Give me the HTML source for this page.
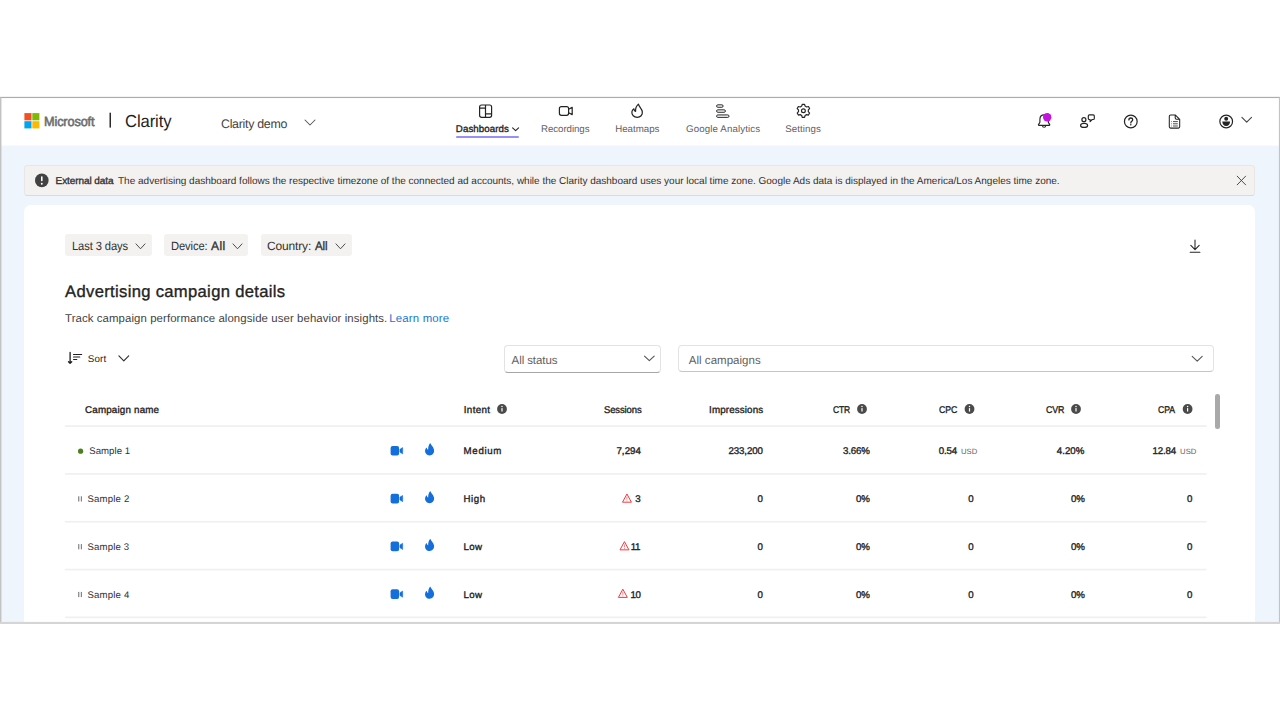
<!DOCTYPE html>
<html><head><meta charset="utf-8"><title>Clarity</title>
<style>
html,body{margin:0;padding:0;background:#fff;}
body{width:1280px;height:720px;position:relative;overflow:hidden;font-family:"Liberation Sans",sans-serif;}
.abs{position:absolute;}
.t{position:absolute;white-space:nowrap;text-rendering:geometricPrecision;line-height:20px;height:20px;font-family:"Liberation Sans",sans-serif;}
svg{position:absolute;overflow:visible;}
.line{position:absolute;height:1px;background:#efedeb;left:65px;width:1141.5px;}
</style></head><body>
<!-- frame -->
<div class="abs" id="frame" style="left:0;top:97px;width:1280px;height:527px;background:#eef5fd;"></div>
<div class="abs" id="hdr" style="left:0;top:97px;width:1280px;height:48px;background:#fff;"></div>
<div class="abs" style="left:0;top:145px;width:1280px;height:1px;background:#f8fbfe;"></div>
<!-- banner -->
<div class="abs" id="banner" style="left:24.4px;top:165.2px;width:1230.6px;height:30.7px;box-sizing:border-box;background:#f3f2f1;border:1px solid #e9e7e5;border-bottom:1.2px solid #dcdad8;border-radius:3.5px;"></div>
<!-- card -->
<div class="abs" id="card" style="left:24.4px;top:205px;width:1230.8px;height:416.9px;background:#fff;border-radius:6.5px 6.5px 0 0;"></div>
<!-- chips -->
<div class="abs" style="left:65px;top:234.3px;width:87px;height:22px;background:#f3f2f1;border-radius:3px;"></div>
<div class="abs" style="left:163.8px;top:234.3px;width:84.2px;height:22px;background:#f3f2f1;border-radius:3px;"></div>
<div class="abs" style="left:260.8px;top:234.3px;width:91.2px;height:22px;background:#f3f2f1;border-radius:3px;"></div>
<!-- dropdowns -->
<div class="abs" style="left:503.7px;top:345.4px;width:157.4px;height:27.2px;box-sizing:border-box;background:#fff;border:1px solid #e3e3e3;border-bottom:1.7px solid #a6a6a6;border-radius:4px;"></div>
<div class="abs" style="left:678.2px;top:345.4px;width:536.3px;height:26.4px;box-sizing:border-box;background:#fff;border:1px solid #e3e3e3;border-bottom:1.5px solid #c6c6c6;border-radius:4px;"></div>
<!-- scrollbar -->
<div class="abs" style="left:1215px;top:394.3px;width:4.6px;height:34.8px;background:#a9a9a9;border-radius:2.3px;"></div>
<!-- nav underline -->
<div class="abs" style="left:455.9px;top:136px;width:62.8px;height:2px;background:#9590fc;border-radius:1px;"></div>

<svg width="1280" height="720" viewBox="0 0 1280 720" style="left:0;top:0;"><rect x="0" y="96.85" width="1280" height="1.2" fill="#adadad"/><rect x="0" y="97.4" width="1.45" height="526.4" fill="#c3c3c3"/><rect x="1278.9" y="97.4" width="1.1" height="526.4" fill="#c3c3c3"/><rect x="0" y="621.9" width="1280" height="2.1" fill="#d5d5d5"/>
<rect x="24.4" y="113.1" width="7.1" height="7.2" fill="#f25022"/><rect x="32.3" y="113.1" width="7.1" height="7.2" fill="#7fba00"/><rect x="24.4" y="121.2" width="7.1" height="7.2" fill="#00a4ef"/><rect x="32.3" y="121.2" width="7.1" height="7.2" fill="#ffb900"/><rect x="109.5" y="112.7" width="1.5" height="14.9" fill="#2b2b2b"/>
<rect x="65" y="425.25" width="1141.6" height="1.7" fill="#f2f0ee"/>
<rect x="65" y="473.10" width="1141.6" height="1.7" fill="#f2f0ee"/>
<rect x="65" y="520.90" width="1141.6" height="1.7" fill="#f2f0ee"/>
<rect x="65" y="568.70" width="1141.6" height="1.7" fill="#f2f0ee"/>
<rect x="65" y="616.50" width="1141.6" height="1.7" fill="#f2f0ee"/>
<path d="M305 120 L310.0 125 L315 120" fill="none" stroke="#555" stroke-width="1.05" stroke-linecap="round" stroke-linejoin="round"/>
<rect x="479.6" y="105" width="12" height="12.3" rx="2" fill="none" stroke="#242424" stroke-width="1.2"/><path d="M485.5 105 V117.3 M479.6 108.2 H485.5 M485.5 113.9 H491.6" fill="none" stroke="#242424" stroke-width="1.2"/>
<path d="M512.6 127.8 L515.6 130.6 L518.6 127.8" fill="none" stroke="#242424" stroke-width="1.1" stroke-linecap="round" stroke-linejoin="round"/>
<rect x="559.4" y="106.6" width="9.2" height="8.7" rx="2" fill="none" stroke="#242424" stroke-width="1.2"/><path d="M568.6 109.3 L572.2 107.4 V114.6 L568.6 112.7" fill="none" stroke="#242424" stroke-width="1.2" stroke-linejoin="round"/>
<path transform="translate(631.8,104.1)" d="M6.6 0 C7.2 2.6 10.0 4.3 10.5 7.6 C11.0 10.9 8.6 13.2 5.4 13.2 C2.2 13.2 -0.3 10.8 0.1 7.8 C0.3 6.3 1.1 5.2 2.1 4.7 C2.1 5.9 2.7 6.9 3.8 7.2 C3.5 4.4 4.6 1.8 6.6 0Z" fill="none" stroke="#242424" stroke-width="1.25" stroke-linejoin="round"/>
<rect x="716.6" y="104.85" width="6.5" height="2.4" rx="1.2" fill="none" stroke="#242424" stroke-width="1"/><rect x="716.6" y="109.85" width="8.8" height="2.4" rx="1.2" fill="none" stroke="#242424" stroke-width="1"/><rect x="716.6" y="114.95" width="12.4" height="2.4" rx="1.2" fill="none" stroke="#242424" stroke-width="1"/>
<path d="M802.23 104.30 L804.57 104.30 L805.09 106.10 L806.63 106.98 L808.44 106.54 L809.61 108.56 L808.32 109.91 L808.32 111.69 L809.61 113.04 L808.44 115.06 L806.63 114.62 L805.09 115.50 L804.57 117.30 L802.23 117.30 L801.71 115.50 L800.17 114.62 L798.36 115.06 L797.19 113.04 L798.48 111.69 L798.48 109.91 L797.19 108.56 L798.36 106.54 L800.17 106.98 L801.71 106.10Z" fill="none" stroke="#242424" stroke-width="1.2" stroke-linejoin="round"/><circle cx="803.4" cy="110.8" r="1.9" fill="none" stroke="#242424" stroke-width="1.2"/>
<path d="M1044.1 114.9 C1041.3 114.9 1039.9 117 1039.9 119.4 V122.3 L1038.5 124.6 C1038.3 125 1038.5 125.3 1039 125.3 H1049.2 C1049.7 125.3 1049.9 125 1049.7 124.6 L1048.3 122.3 V119.4 C1048.3 117 1046.9 114.9 1044.1 114.9Z" fill="none" stroke="#242424" stroke-width="1.15" stroke-linejoin="round"/><path d="M1042.3 125.5 C1042.5 126.7 1043.2 127.3 1044.1 127.3 C1045 127.3 1045.7 126.7 1045.9 125.5" fill="none" stroke="#242424" stroke-width="1.05"/><circle cx="1047.2" cy="117.2" r="4.2" fill="#c512e2"/>
<circle cx="1083.9" cy="119.7" r="2.0" fill="none" stroke="#242424" stroke-width="1.2"/><ellipse cx="1084.1" cy="125.45" rx="3.5" ry="2.0" fill="none" stroke="#242424" stroke-width="1.2"/><path d="M1089.4 114.9 H1093.2 C1093.9 114.9 1094.3 115.3 1094.3 116 V118.4 C1094.3 119.1 1093.9 119.5 1093.2 119.5 H1092.2 L1090.1 121.7 V119.5 H1089.4 C1088.7 119.5 1088.3 119.1 1088.3 118.4 V116 C1088.3 115.3 1088.7 114.9 1089.4 114.9Z" fill="none" stroke="#242424" stroke-width="1.15" stroke-linejoin="round"/>
<circle cx="1130.8" cy="121.5" r="6.35" fill="none" stroke="#242424" stroke-width="1.2"/><path d="M1128.9 119.9 C1128.9 118.6 1129.7 118 1130.8 118 C1131.9 118 1132.7 118.7 1132.7 119.7 C1132.7 121.2 1130.8 121.2 1130.8 122.9" fill="none" stroke="#242424" stroke-width="1.3" stroke-linecap="round"/><circle cx="1130.8" cy="124.8" r="0.8" fill="#242424"/>
<path d="M1170.6 114.9 H1175.2 L1179.7 119.3 V126.8 C1179.7 127.6 1179.2 128.1 1178.4 128.1 H1170.6 C1169.8 128.1 1169.3 127.6 1169.3 126.8 V116.2 C1169.3 115.4 1169.8 114.9 1170.6 114.9Z M1175.2 114.9 V118 C1175.2 118.8 1175.7 119.3 1176.5 119.3 H1179.7" fill="none" stroke="#242424" stroke-width="1.05" stroke-linejoin="round"/><path d="M1171.4 121.6 H1172 M1173 121.6 H1177.8 M1171.4 123.8 H1172 M1173 123.8 H1177.8 M1171.4 126 H1172 M1173 126 H1177.8" stroke="#3a3a3a" stroke-width="0.9" fill="none"/>
<circle cx="1226.2" cy="121.5" r="6.35" fill="none" stroke="#242424" stroke-width="1.2"/><circle cx="1226.2" cy="118.8" r="1.95" fill="#242424"/><path d="M1222.3 121.5 H1230.1 C1230.1 124.2 1228.5 126.1 1226.2 126.1 C1223.9 126.1 1222.3 124.2 1222.3 121.5Z" fill="#242424"/>
<path d="M1241.9 117.3 L1246.7 122.1 L1251.5 117.3" fill="none" stroke="#444" stroke-width="1.1" stroke-linecap="round" stroke-linejoin="round"/>
<circle cx="41.8" cy="180.4" r="6.8" fill="#424242"/><rect x="41.0" y="176.3" width="1.6" height="5" rx="0.7" fill="#fff"/><circle cx="41.8" cy="183.7" r="0.95" fill="#fff"/>
<path d="M1237.2 176.2 L1245.6 184.8 M1245.6 176.2 L1237.2 184.8" stroke="#424242" stroke-width="0.95" stroke-linecap="round" fill="none"/>
<path d="M136 243.9 L140.5 248.8 L145 243.9" fill="none" stroke="#454545" stroke-width="0.95" stroke-linecap="round" stroke-linejoin="round"/>
<path d="M233 243.9 L237.5 248.8 L242 243.9" fill="none" stroke="#454545" stroke-width="0.95" stroke-linecap="round" stroke-linejoin="round"/>
<path d="M336 243.9 L340.5 248.8 L345 243.9" fill="none" stroke="#454545" stroke-width="0.95" stroke-linecap="round" stroke-linejoin="round"/>
<path d="M1195 240 V249.4 M1190.8 245.4 L1195 249.6 L1199.2 245.4 M1190.2 252.3 H1199.9" fill="none" stroke="#242424" stroke-width="1.05" stroke-linecap="round" stroke-linejoin="round"/>
<path d="M70.1 352.4 V363.2 M68.5 361.7 L70.1 363.4 L71.7 361.7" fill="none" stroke="#1f1f1f" stroke-width="1.3" stroke-linecap="round" stroke-linejoin="round"/><path d="M73.5 354.4 H81.7 M73.5 357.0 H79.8 M73.5 359.5 H76.8" fill="none" stroke="#1f1f1f" stroke-width="1.05" stroke-linecap="round"/>
<path d="M118.9 355.9 L123.8 360.8 L128.7 355.9" fill="none" stroke="#333" stroke-width="1.2" stroke-linecap="round" stroke-linejoin="round"/>
<path d="M644.5 356.1 L649.35 360.7 L654.2 356.1" fill="none" stroke="#555" stroke-width="1.1" stroke-linecap="round" stroke-linejoin="round"/>
<path d="M1192.2 356.4 L1197.2 361.2 L1202.2 356.4" fill="none" stroke="#555" stroke-width="1.1" stroke-linecap="round" stroke-linejoin="round"/>
<circle cx="502" cy="409" r="4.9" fill="#4a4a4a"/><rect x="501.4" y="408.1" width="1.2" height="3.4" fill="#fff"/><circle cx="502" cy="406.6" r="0.75" fill="#fff"/>
<circle cx="862" cy="409" r="4.9" fill="#4a4a4a"/><rect x="861.4" y="408.1" width="1.2" height="3.4" fill="#fff"/><circle cx="862" cy="406.6" r="0.75" fill="#fff"/>
<circle cx="969.5" cy="409" r="4.9" fill="#4a4a4a"/><rect x="968.9" y="408.1" width="1.2" height="3.4" fill="#fff"/><circle cx="969.5" cy="406.6" r="0.75" fill="#fff"/>
<circle cx="1076" cy="409" r="4.9" fill="#4a4a4a"/><rect x="1075.4" y="408.1" width="1.2" height="3.4" fill="#fff"/><circle cx="1076" cy="406.6" r="0.75" fill="#fff"/>
<circle cx="1187.6" cy="409" r="4.9" fill="#4a4a4a"/><rect x="1187.0" y="408.1" width="1.2" height="3.4" fill="#fff"/><circle cx="1187.6" cy="406.6" r="0.75" fill="#fff"/>
<circle cx="80.6" cy="451.2" r="2.6" fill="#4b7f1f"/>
<rect x="390.6" y="445.9" width="8.5" height="9.7" rx="2" fill="#146fdc"/><path d="M399.90000000000003 449.29999999999995 L402.70000000000005 447.59999999999997 V453.9 L399.90000000000003 452.2Z" fill="#146fdc" stroke="#146fdc" stroke-width="0.5" stroke-linejoin="round"/>
<path transform="translate(425,443.1)" d="M5.3 0 C5.9 2.2 8.4 3.6 9.0 6.6 C9.6 9.8 7.4 12.3 4.6 12.3 C1.8 12.3 -0.3 10.0 0.1 7.2 C0.3 5.8 1.0 4.8 1.8 4.3 C1.9 5.4 2.4 6.2 3.2 6.5 C3.0 4.0 3.8 1.6 5.3 0Z" fill="#146fdc"/>
<rect x="390.6" y="493.7" width="8.5" height="9.7" rx="2" fill="#146fdc"/><path d="M399.90000000000003 497.09999999999997 L402.70000000000005 495.4 V501.7 L399.90000000000003 500.0Z" fill="#146fdc" stroke="#146fdc" stroke-width="0.5" stroke-linejoin="round"/>
<path transform="translate(425,490.90000000000003)" d="M5.3 0 C5.9 2.2 8.4 3.6 9.0 6.6 C9.6 9.8 7.4 12.3 4.6 12.3 C1.8 12.3 -0.3 10.0 0.1 7.2 C0.3 5.8 1.0 4.8 1.8 4.3 C1.9 5.4 2.4 6.2 3.2 6.5 C3.0 4.0 3.8 1.6 5.3 0Z" fill="#146fdc"/>
<rect x="78.2" y="496.3" width="1.1" height="5.2" fill="#777"/><rect x="80.8" y="496.3" width="1.1" height="5.2" fill="#777"/>
<rect x="390.6" y="541.5" width="8.5" height="9.7" rx="2" fill="#146fdc"/><path d="M399.90000000000003 544.9 L402.70000000000005 543.2 V549.5 L399.90000000000003 547.8Z" fill="#146fdc" stroke="#146fdc" stroke-width="0.5" stroke-linejoin="round"/>
<path transform="translate(425,538.7)" d="M5.3 0 C5.9 2.2 8.4 3.6 9.0 6.6 C9.6 9.8 7.4 12.3 4.6 12.3 C1.8 12.3 -0.3 10.0 0.1 7.2 C0.3 5.8 1.0 4.8 1.8 4.3 C1.9 5.4 2.4 6.2 3.2 6.5 C3.0 4.0 3.8 1.6 5.3 0Z" fill="#146fdc"/>
<rect x="78.2" y="544.1" width="1.1" height="5.2" fill="#777"/><rect x="80.8" y="544.1" width="1.1" height="5.2" fill="#777"/>
<rect x="390.6" y="589.3" width="8.5" height="9.7" rx="2" fill="#146fdc"/><path d="M399.90000000000003 592.6999999999999 L402.70000000000005 591.0 V597.3 L399.90000000000003 595.5999999999999Z" fill="#146fdc" stroke="#146fdc" stroke-width="0.5" stroke-linejoin="round"/>
<path transform="translate(425,586.5)" d="M5.3 0 C5.9 2.2 8.4 3.6 9.0 6.6 C9.6 9.8 7.4 12.3 4.6 12.3 C1.8 12.3 -0.3 10.0 0.1 7.2 C0.3 5.8 1.0 4.8 1.8 4.3 C1.9 5.4 2.4 6.2 3.2 6.5 C3.0 4.0 3.8 1.6 5.3 0Z" fill="#146fdc"/>
<rect x="78.2" y="591.9" width="1.1" height="5.2" fill="#777"/><rect x="80.8" y="591.9" width="1.1" height="5.2" fill="#777"/>
<path transform="translate(622,493.3)" d="M4.95 0.7 L9.4 8.9 H0.5Z" fill="none" stroke="#ee3a3f" stroke-width="1" stroke-linejoin="round"/><rect x="626.55" y="496.7" width="0.8" height="2.9" fill="#ee3a3f" opacity="0.75"/><rect x="626.55" y="500.3" width="0.8" height="0.9" fill="#ee3a3f" opacity="0.75"/>
<path transform="translate(619.5,540.95)" d="M4.95 0.7 L9.4 8.9 H0.5Z" fill="none" stroke="#ee3a3f" stroke-width="1" stroke-linejoin="round"/><rect x="624.05" y="544.35" width="0.8" height="2.9" fill="#ee3a3f" opacity="0.75"/><rect x="624.05" y="547.95" width="0.8" height="0.9" fill="#ee3a3f" opacity="0.75"/>
<path transform="translate(617.9,588.5)" d="M4.95 0.7 L9.4 8.9 H0.5Z" fill="none" stroke="#ee3a3f" stroke-width="1" stroke-linejoin="round"/><rect x="622.4499999999999" y="591.9" width="0.8" height="2.9" fill="#ee3a3f" opacity="0.75"/><rect x="622.4499999999999" y="595.5" width="0.8" height="0.9" fill="#ee3a3f" opacity="0.75"/></svg>
<span class="t" style="left:43.61px;top:112px;font-size:13.2px;font-weight:400;color:#6e6e6e;letter-spacing:-0.120px;-webkit-text-stroke:0.6px #6e6e6e;transform:scaleX(0.9615);transform-origin:left center;">Microsoft</span>
<span class="t" style="left:125.22px;top:111px;font-size:17.4px;font-weight:400;color:#1f1f1f;letter-spacing:-0.120px;transform:scaleX(0.9583);transform-origin:left center;">Clarity</span>
<span class="t" style="left:221.00px;top:114px;font-size:12.4px;font-weight:400;color:#424242;letter-spacing:-0.293px;">Clarity demo</span>
<span class="t" style="left:455.81px;top:120px;font-size:9.7px;font-weight:400;color:#242424;letter-spacing:0.098px;-webkit-text-stroke:0.35px #242424;">Dashboards</span>
<span class="t" style="left:541.03px;top:120px;font-size:9.7px;font-weight:400;color:#616161;letter-spacing:-0.059px;">Recordings</span>
<span class="t" style="left:615.23px;top:120px;font-size:9.7px;font-weight:400;color:#616161;letter-spacing:0.009px;">Heatmaps</span>
<span class="t" style="left:686.00px;top:120px;font-size:9.7px;font-weight:400;color:#616161;letter-spacing:0.129px;">Google Analytics</span>
<span class="t" style="left:785.24px;top:120px;font-size:9.7px;font-weight:400;color:#616161;letter-spacing:0.100px;">Settings</span>
<span class="t" style="left:55.61px;top:172px;font-size:10.0px;font-weight:400;color:#323130;letter-spacing:-0.079px;-webkit-text-stroke:0.35px #323130;">External data</span>
<span class="t" style="left:118.03px;top:172px;font-size:10.0px;font-weight:400;color:#323130;letter-spacing:-0.003px;">The advertising dashboard follows the respective timezone of the connected ad accounts, while the Clarity dashboard uses your local time zone. Google Ads data is displayed in the America/Los Angeles time zone.</span>
<span class="t" style="left:72.04px;top:236px;font-size:12.0px;font-weight:400;color:#323130;letter-spacing:-0.120px;transform:scaleX(0.9330);transform-origin:left center;">Last 3 days</span>
<span class="t" style="left:170.61px;top:236px;font-size:12.0px;font-weight:400;color:#323130;letter-spacing:-0.120px;transform:scaleX(0.9310);transform-origin:left center;">Device:</span>
<span class="t" style="left:211.12px;top:236px;font-size:12.0px;font-weight:400;color:#323130;letter-spacing:0.396px;-webkit-text-stroke:0.35px #323130;">All</span>
<span class="t" style="left:267.07px;top:236px;font-size:12.0px;font-weight:400;color:#323130;letter-spacing:-0.162px;">Country:</span>
<span class="t" style="left:314.99px;top:236px;font-size:12.0px;font-weight:400;color:#323130;letter-spacing:-0.120px;-webkit-text-stroke:0.35px #323130;transform:scaleX(0.9663);transform-origin:left center;">All</span>
<span class="t" style="left:65.12px;top:282px;font-size:16.6px;font-weight:400;color:#242424;letter-spacing:0.324px;-webkit-text-stroke:0.35px #242424;">Advertising campaign details</span>
<span class="t" style="left:65.01px;top:309px;font-size:11.4px;font-weight:400;color:#424242;letter-spacing:0.093px;">Track campaign performance alongside user behavior insights.</span>
<span class="t" style="left:389.15px;top:309px;font-size:11.4px;font-weight:400;color:#1576cb;letter-spacing:0.198px;">Learn more</span>
<span class="t" style="left:87.74px;top:350px;font-size:9.8px;font-weight:400;color:#242424;letter-spacing:0.197px;">Sort</span>
<span class="t" style="left:511.61px;top:351px;font-size:11.5px;font-weight:400;color:#616161;letter-spacing:-0.092px;">All status</span>
<span class="t" style="left:688.75px;top:351px;font-size:11.5px;font-weight:400;color:#616161;letter-spacing:0.032px;">All campaigns</span>
<span class="t" style="left:85.02px;top:401px;font-size:9.8px;font-weight:400;color:#242424;letter-spacing:0.180px;-webkit-text-stroke:0.35px #242424;">Campaign name</span>
<span class="t" style="left:463.80px;top:401px;font-size:9.8px;font-weight:400;color:#242424;letter-spacing:0.336px;-webkit-text-stroke:0.35px #242424;">Intent</span>
<span class="t" style="left:603.59px;top:401px;font-size:9.8px;font-weight:400;color:#242424;letter-spacing:-0.120px;-webkit-text-stroke:0.35px #242424;transform:scaleX(0.9666);transform-origin:left center;">Sessions</span>
<span class="t" style="left:709.04px;top:401px;font-size:9.8px;font-weight:400;color:#242424;letter-spacing:0.126px;-webkit-text-stroke:0.35px #242424;">Impressions</span>
<span class="t" style="left:832.56px;top:401px;font-size:9.8px;font-weight:400;color:#242424;letter-spacing:-0.120px;-webkit-text-stroke:0.35px #242424;transform:scaleX(0.8667);transform-origin:left center;">CTR</span>
<span class="t" style="left:939.05px;top:401px;font-size:9.8px;font-weight:400;color:#242424;letter-spacing:-0.120px;-webkit-text-stroke:0.35px #242424;transform:scaleX(0.8935);transform-origin:left center;">CPC</span>
<span class="t" style="left:1046.01px;top:401px;font-size:9.8px;font-weight:400;color:#242424;letter-spacing:-0.120px;-webkit-text-stroke:0.35px #242424;transform:scaleX(0.9000);transform-origin:left center;">CVR</span>
<span class="t" style="left:1157.70px;top:401px;font-size:9.8px;font-weight:400;color:#242424;letter-spacing:-0.120px;-webkit-text-stroke:0.35px #242424;transform:scaleX(0.8866);transform-origin:left center;">CPA</span>
<span class="t" style="left:89.24px;top:442px;font-size:9.6px;font-weight:400;color:#323130;letter-spacing:0.054px;">Sample 1</span>
<span class="t" style="left:463.62px;top:442px;font-size:9.7px;font-weight:400;color:#242424;letter-spacing:0.672px;-webkit-text-stroke:0.35px #242424;">Medium</span>
<span class="t" style="left:616.38px;top:442px;font-size:9.7px;font-weight:400;color:#242424;letter-spacing:0.088px;-webkit-text-stroke:0.35px #242424;">7,294</span>
<span class="t" style="left:728.60px;top:442px;font-size:9.7px;font-weight:400;color:#242424;letter-spacing:-0.134px;-webkit-text-stroke:0.35px #242424;">233,200</span>
<span class="t" style="left:843.00px;top:442px;font-size:9.7px;font-weight:400;color:#242424;letter-spacing:-0.135px;-webkit-text-stroke:0.35px #242424;">3.66%</span>
<span class="t" style="left:938.74px;top:442px;font-size:9.7px;font-weight:400;color:#242424;letter-spacing:-0.148px;-webkit-text-stroke:0.35px #242424;">0.54</span>
<span class="t" style="left:961.07px;top:442px;font-size:7.7px;font-weight:400;color:#616161;letter-spacing:-0.037px;">USD</span>
<span class="t" style="left:1056.87px;top:442px;font-size:9.7px;font-weight:400;color:#242424;letter-spacing:0.007px;-webkit-text-stroke:0.35px #242424;">4.20%</span>
<span class="t" style="left:1152.62px;top:442px;font-size:9.7px;font-weight:400;color:#242424;letter-spacing:-0.173px;-webkit-text-stroke:0.35px #242424;">12.84</span>
<span class="t" style="left:1180.00px;top:442px;font-size:7.7px;font-weight:400;color:#616161;letter-spacing:0.091px;">USD</span>
<span class="t" style="left:87.44px;top:490px;font-size:9.6px;font-weight:400;color:#323130;letter-spacing:0.182px;">Sample 2</span>
<span class="t" style="left:463.62px;top:490px;font-size:9.7px;font-weight:400;color:#242424;letter-spacing:0.495px;-webkit-text-stroke:0.35px #242424;">High</span>
<span class="t" style="left:635.20px;top:490px;font-size:9.7px;font-weight:400;color:#242424;letter-spacing:0.000px;-webkit-text-stroke:0.35px #242424;">3</span>
<span class="t" style="left:757.50px;top:490px;font-size:9.7px;font-weight:400;color:#242424;letter-spacing:0.000px;-webkit-text-stroke:0.35px #242424;">0</span>
<span class="t" style="left:856.04px;top:490px;font-size:9.7px;font-weight:400;color:#242424;letter-spacing:-0.184px;-webkit-text-stroke:0.35px #242424;">0%</span>
<span class="t" style="left:968.36px;top:490px;font-size:9.7px;font-weight:400;color:#242424;letter-spacing:0.000px;-webkit-text-stroke:0.35px #242424;">0</span>
<span class="t" style="left:1071.04px;top:490px;font-size:9.7px;font-weight:400;color:#242424;letter-spacing:-0.184px;-webkit-text-stroke:0.35px #242424;">0%</span>
<span class="t" style="left:1186.99px;top:490px;font-size:9.7px;font-weight:400;color:#242424;letter-spacing:0.000px;-webkit-text-stroke:0.35px #242424;">0</span>
<span class="t" style="left:87.44px;top:538px;font-size:9.6px;font-weight:400;color:#323130;letter-spacing:0.173px;">Sample 3</span>
<span class="t" style="left:463.62px;top:538px;font-size:9.7px;font-weight:400;color:#242424;letter-spacing:0.328px;-webkit-text-stroke:0.35px #242424;">Low</span>
<span class="t" style="left:630.85px;top:538px;font-size:9.7px;font-weight:400;color:#242424;letter-spacing:-0.450px;-webkit-text-stroke:0.35px #242424;">11</span>
<span class="t" style="left:757.50px;top:538px;font-size:9.7px;font-weight:400;color:#242424;letter-spacing:0.000px;-webkit-text-stroke:0.35px #242424;">0</span>
<span class="t" style="left:856.04px;top:538px;font-size:9.7px;font-weight:400;color:#242424;letter-spacing:-0.184px;-webkit-text-stroke:0.35px #242424;">0%</span>
<span class="t" style="left:968.36px;top:538px;font-size:9.7px;font-weight:400;color:#242424;letter-spacing:0.000px;-webkit-text-stroke:0.35px #242424;">0</span>
<span class="t" style="left:1071.04px;top:538px;font-size:9.7px;font-weight:400;color:#242424;letter-spacing:-0.184px;-webkit-text-stroke:0.35px #242424;">0%</span>
<span class="t" style="left:1186.99px;top:538px;font-size:9.7px;font-weight:400;color:#242424;letter-spacing:0.000px;-webkit-text-stroke:0.35px #242424;">0</span>
<span class="t" style="left:87.44px;top:586px;font-size:9.6px;font-weight:400;color:#323130;letter-spacing:0.181px;">Sample 4</span>
<span class="t" style="left:463.62px;top:586px;font-size:9.7px;font-weight:400;color:#242424;letter-spacing:0.328px;-webkit-text-stroke:0.35px #242424;">Low</span>
<span class="t" style="left:630.51px;top:586px;font-size:9.7px;font-weight:400;color:#242424;letter-spacing:-0.450px;-webkit-text-stroke:0.35px #242424;">10</span>
<span class="t" style="left:757.50px;top:586px;font-size:9.7px;font-weight:400;color:#242424;letter-spacing:0.000px;-webkit-text-stroke:0.35px #242424;">0</span>
<span class="t" style="left:856.04px;top:586px;font-size:9.7px;font-weight:400;color:#242424;letter-spacing:-0.184px;-webkit-text-stroke:0.35px #242424;">0%</span>
<span class="t" style="left:968.36px;top:586px;font-size:9.7px;font-weight:400;color:#242424;letter-spacing:0.000px;-webkit-text-stroke:0.35px #242424;">0</span>
<span class="t" style="left:1071.04px;top:586px;font-size:9.7px;font-weight:400;color:#242424;letter-spacing:-0.184px;-webkit-text-stroke:0.35px #242424;">0%</span>
<span class="t" style="left:1186.99px;top:586px;font-size:9.7px;font-weight:400;color:#242424;letter-spacing:0.000px;-webkit-text-stroke:0.35px #242424;">0</span>
</body></html>
